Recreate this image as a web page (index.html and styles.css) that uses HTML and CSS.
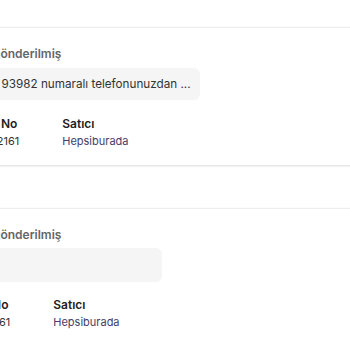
FILE: index.html
```html
<!DOCTYPE html>
<html lang="tr">

<head>
    <meta charset="UTF-8">
    <meta name="viewport" content="width=device-width, initial-scale=1.0">
    <title>Siparişlerim</title>
    <link rel="stylesheet" href="styles.css">
</head>

<body>
    <main class="orders">
        <article class="order">
            <h3 class="order-status">Teslimat kodunuz SMS'le gönderilmiş</h3>
            <p class="order-message">Teslim kodunuz 0532 *** 93982 numaralı telefonunuzdan ...</p>
            <div class="order-info">
                <div class="info-col">
                    <b>Tarih</b>
                    <span>22 Mart 2024</span>
                </div>
                <div class="info-col">
                    <b>Sipariş No</b>
                    <span>4803512161</span>
                </div>
                <div class="info-col">
                    <b>Satıcı</b>
                    <span class="seller">Hepsiburada</span>
                </div>
            </div>
        </article>

        <article class="order">
            <h3 class="order-status">Teslimat kodunuz SMS'le gönderilmiş</h3>
            <p class="order-message empty"></p>
            <div class="order-info">
                <div class="info-col">
                    <b>Tarih</b>
                    <span>1 Mart 2024</span>
                </div>
                <div class="info-col">
                    <b>Sipariş No</b>
                    <span>4803215161</span>
                </div>
                <div class="info-col">
                    <b>Satıcı</b>
                    <span class="seller">Hepsiburada</span>
                </div>
            </div>
        </article>
    </main>
</body>

</html>
```

FILE: styles.css
```css
body,
html {
    margin: 0;
}

body {
    background-color: white;
    overflow: hidden;
}

* {
    font-family: 'Inter', sans-serif;
}

/* the list is wider than the window, its left part is scrolled out of view */
.orders {
    display: flex;
    flex-direction: column;
    gap: 44px;
    padding-top: 28px;
    margin-left: -156px;
    width: 620px;
}

.order {
    height: 137px;
    box-sizing: border-box;
    padding: 18px 0 0;
    background-color: white;
    box-shadow: 0 0 2px rgba(0, 0, 0, 0.18), 0 1px 3px rgba(0, 0, 0, 0.08);
}

.order-status {
    margin: 0;
    font-size: 12px;
    font-weight: 600;
    color: #666;
    line-height: 16px;
}

.order-message {
    width: fit-content;
    box-sizing: border-box;
    margin: 6px 0 0;
    padding: 0 9px 0 15px;
    height: 32px;
    line-height: 32px;
    border-radius: 6px;
    background-color: #f5f5f5;
    font-size: 11.7px;
    color: #333;
}

.order-message.empty {
    width: 318px;
    height: 34px;
    margin-top: 5px;
    margin-bottom: -1px;
}

.order-info {
    display: flex;
    gap: 43px;
    margin-top: 17px;
}

.info-col {
    display: flex;
    flex-direction: column;
    gap: 3px;
    line-height: 14px;
}

.info-col b {
    font-size: 12px;
    font-weight: 600;
    color: #222;
}

.info-col span {
    font-size: 11px;
    color: #333;
}

.info-col .seller {
    color: #463c66;
}
```
